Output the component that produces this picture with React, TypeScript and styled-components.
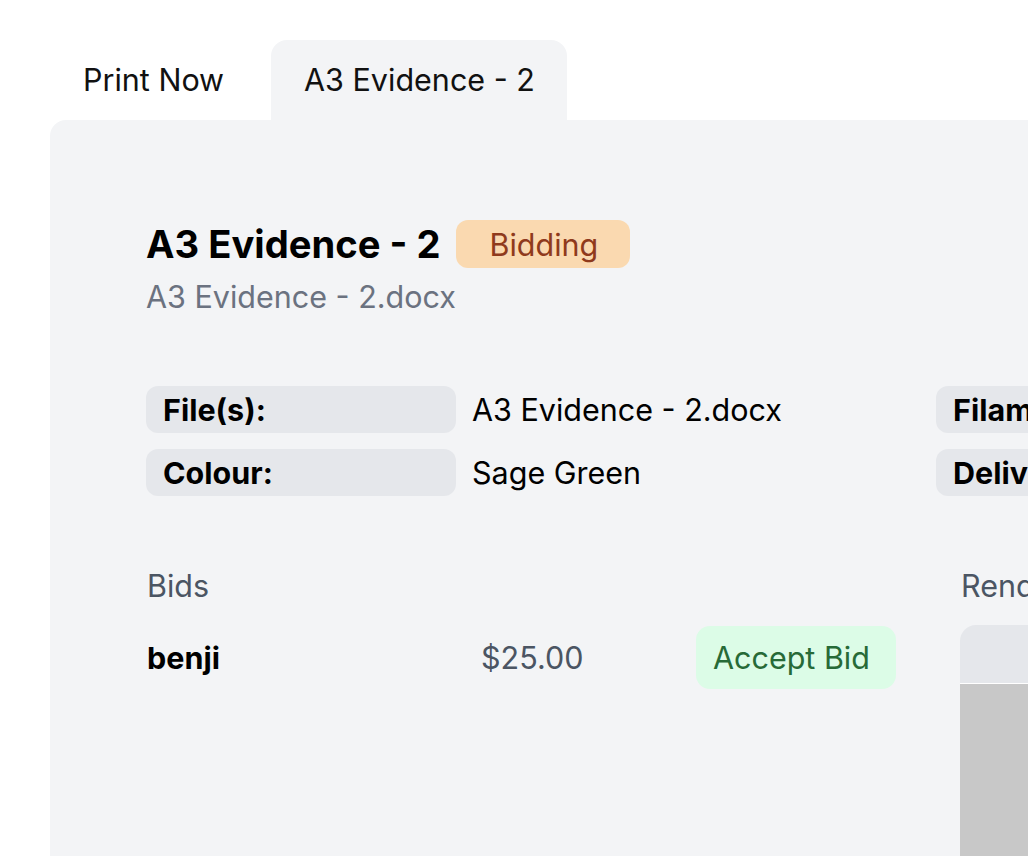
import React from "react";
import styled, { createGlobalStyle } from "styled-components";

const Global = createGlobalStyle`
  html, body { margin: 0; padding: 0; overflow: hidden; background: #ffffff; }
  body { font-family: Inter, "Noto Sans", "Liberation Sans", sans-serif; color: #000; }
  * { box-sizing: border-box; }
`;

const FONT = "30.5px";

const Page = styled.div`
  padding: 40px 0 0 50px;
  width: 1028px;
  height: 856px;
  overflow: hidden;
`;

const Tabs = styled.div`
  display: flex;
  gap: 15px;
`;

const Tab = styled.div<{ $active?: boolean }>`
  height: 80px;
  padding: 0 32px 0 33px;
  display: flex;
  align-items: center;
  font-size: ${FONT};
  line-height: 1;
  color: #111;
  white-space: nowrap;
  background: ${(p) => (p.$active ? "#f3f4f6" : "transparent")};
  border-radius: 16px 16px 0 0;
`;

const Panel = styled.div`
  background: #f3f4f6;
  border-radius: 16px 16px 0 0;
  padding: 96px 96px 0 96px;
  height: 736px;
  width: 1600px;
`;

const HeaderRow = styled.div`
  display: flex;
  align-items: center;
  gap: 16px;
  height: 56px;
`;

const Title = styled.h1`
  margin: 0;
  font-size: 38.2px;
  font-weight: 700;
  line-height: 1;
`;

const Badge = styled.span`
  display: inline-flex;
  align-items: center;
  height: 48px;
  padding: 0 32px 0 33px;
  border-radius: 12px;
  background: #fad9b0;
  color: #8f3a1c;
  font-size: ${FONT};
`;

const Subtitle = styled.div`
  margin-top: 4px;
  font-size: ${FONT};
  line-height: 42px;
  color: #6b7280;
`;

const InfoGrid = styled.div`
  margin-top: 68px;
  display: grid;
  grid-template-columns: 310px 448px 310px 448px;
  column-gap: 16px;
  row-gap: 16px;
`;

const Label = styled.div`
  background: #e5e7eb;
  border-radius: 12px;
  height: 47px;
  padding: 0 17px;
  display: flex;
  align-items: center;
  font-size: ${FONT};
  font-weight: 700;
  white-space: nowrap;
`;

const Value = styled.div`
  height: 47px;
  display: flex;
  align-items: center;
  font-size: ${FONT};
  white-space: nowrap;
`;

const Lower = styled.div`
  margin-top: 70px;
  display: grid;
  grid-template-columns: 750px 750px;
  column-gap: 64px;
`;

const Column = styled.div`
  display: flex;
  flex-direction: column;
`;

const SectionHeading = styled.div`
  font-size: ${FONT};
  line-height: 40px;
  color: #4b5563;
  padding-left: 1px;
`;

const BidRow = styled.div`
  margin-top: 20px;
  display: grid;
  grid-template-columns: 335px 215px 200px;
  align-items: center;
`;

const Bidder = styled.div`
  font-size: ${FONT};
  font-weight: 700;
  padding-left: 1px;
`;

const Price = styled.div`
  font-size: ${FONT};
  color: #4b5563;
`;

const AcceptButton = styled.button`
  height: 63px;
  width: 200px;
  border: none;
  border-radius: 14px;
  background: #dcfce7;
  color: #276a37;
  font-family: inherit;
  font-size: ${FONT};
  text-align: left;
  padding: 0 17px;
  white-space: nowrap;
`;

const RenderBox = styled.div`
  margin-top: 19px;
  border-radius: 16px 16px 0 0;
  overflow: hidden;
  display: flex;
  flex-direction: column;
  height: 400px;
`;

const RenderBar = styled.div`
  height: 59px;
  background: #e5e7eb;
  border-bottom: 1px solid #ffffff;
`;

const RenderCanvas = styled.div`
  flex: 1;
  background: #c8c8c8;
`;

export default function App() {
  return (
    <>
      <Global />
      <Page>
        <Tabs>
          <Tab>Print Now</Tab>
          <Tab $active>A3 Evidence - 2</Tab>
        </Tabs>
        <Panel>
          <HeaderRow>
            <Title>A3 Evidence - 2</Title>
            <Badge>Bidding</Badge>
          </HeaderRow>
          <Subtitle>A3 Evidence - 2.docx</Subtitle>
          <InfoGrid>
            <Label>File(s):</Label>
            <Value>A3 Evidence - 2.docx</Value>
            <Label>Filament:</Label>
            <Value>PLA</Value>
            <Label>Colour:</Label>
            <Value>Sage Green</Value>
            <Label>Delivery:</Label>
            <Value>Pickup</Value>
          </InfoGrid>
          <Lower>
            <Column>
              <SectionHeading>Bids</SectionHeading>
              <BidRow>
                <Bidder>benji</Bidder>
                <Price>$25.00</Price>
                <AcceptButton>Accept Bid</AcceptButton>
              </BidRow>
            </Column>
            <Column>
              <SectionHeading>Render</SectionHeading>
              <RenderBox>
                <RenderBar />
                <RenderCanvas />
              </RenderBox>
            </Column>
          </Lower>
        </Panel>
      </Page>
    </>
  );
}
